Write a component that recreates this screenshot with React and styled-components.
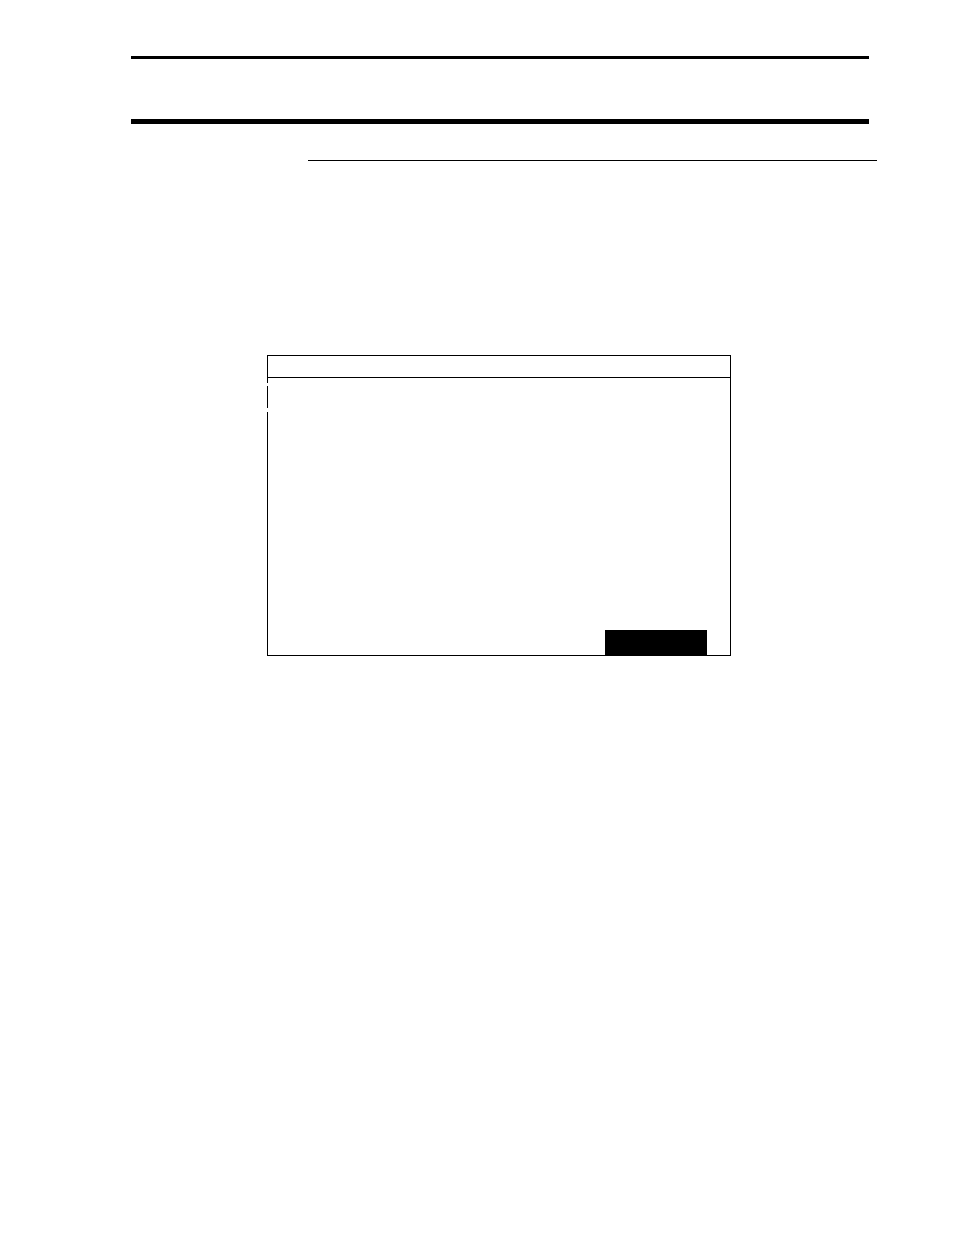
import React from "react";
import styled, { createGlobalStyle } from "styled-components";

const GlobalStyle = createGlobalStyle`
  *, *::before, *::after { box-sizing: border-box; }
  body { margin: 0; background: #fff; }
`;

const Page = styled.div`
  min-height: 100vh;
  padding: 56px 77px 0 131px;
  background: #fff;
`;

const Header = styled.header`
  display: flex;
  flex-direction: column;
  gap: 60px;
  margin-right: 8px;
`;

const Rule = styled.hr`
  width: 100%;
  height: ${(p) => p.$weight}px;
  margin: 0;
  border: 0;
  background: #000;
`;

const Content = styled.main`
  display: flex;
  flex-direction: column;
  gap: 194px;
  padding-top: 36px;
`;

const SectionHeading = styled.div`
  padding-left: 177px;
`;

const Screen = styled.section`
  display: flex;
  flex-direction: column;
  margin: 0 146px 0 136px;
`;

const TitleBar = styled.div`
  height: 23px;
  border: 1px solid #000;
`;

const ScreenBody = styled.div`
  display: flex;
  min-height: 278px;
  border-right: 1px solid #000;
  border-bottom: 1px solid #000;
`;

const Edge = styled.div`
  display: grid;
  grid-template-rows: 5px 3px 22px 4px 1fr;
  width: 1px;
`;

const EdgeSegment = styled.span`
  grid-row: ${(p) => p.$row};
  background: #000;
`;

const Workspace = styled.div`
  display: flex;
  flex: 1;
  align-items: flex-end;
  justify-content: flex-end;
  padding-right: 23px;
`;

const SolidBlock = styled.div`
  width: 102px;
  height: 25px;
  background: #000;
`;

export default function App() {
  return (
    <>
      <GlobalStyle />
      <Page>
        <Header>
          <Rule $weight={3} />
          <Rule $weight={5} />
        </Header>
        <Content>
          <SectionHeading>
            <Rule $weight={1} />
          </SectionHeading>
          <Screen>
            <TitleBar />
            <ScreenBody>
              <Edge>
                <EdgeSegment $row={1} />
                <EdgeSegment $row={3} />
                <EdgeSegment $row={5} />
              </Edge>
              <Workspace>
                <SolidBlock />
              </Workspace>
            </ScreenBody>
          </Screen>
        </Content>
      </Page>
    </>
  );
}
